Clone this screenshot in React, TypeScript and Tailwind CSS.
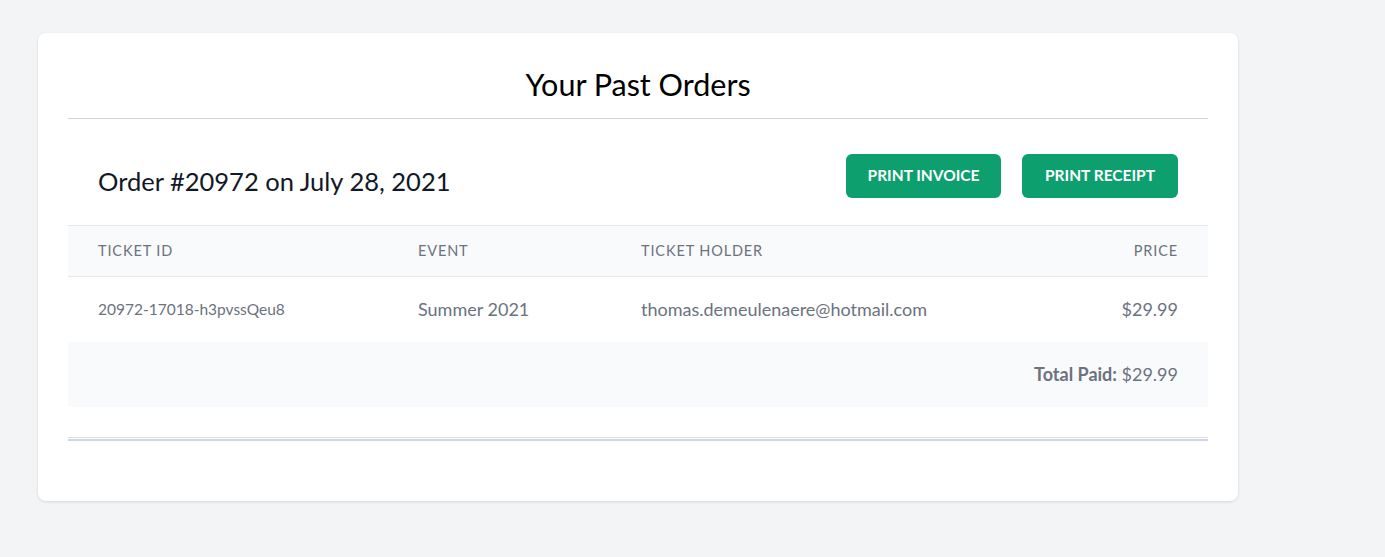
import React from 'react';

const rows = [
  {
    id: '20972-17018-h3pvssQeu8',
    event: 'Summer 2021',
    holder: 'thomas.demeulenaere@hotmail.com',
    price: '$29.99',
  },
];

export default function App() {
  return (
    <div className="min-h-[557px] bg-[#f3f4f6] pt-[33px] pl-[38px] font-['Lato','Noto_Sans',sans-serif]">
      <div className="w-[1200px] rounded-lg bg-white px-[30px] pt-[31px] pb-[60px] shadow-[0_1px_3px_rgba(0,0,0,0.12)]">
        <h1 className="border-b border-[#d4d4d8] pb-[14px] text-center text-[30.5px] leading-[40px] text-black">
          Your Past Orders
        </h1>

        <div className="flex items-center justify-between px-[30px] pt-[35px] pb-[27px]">
          <h2 className="pt-[10px] text-[25.5px] leading-[32px] text-[#111827]">Order #20972 on July 28, 2021</h2>
          <div className="flex gap-[21px]">
            <button className="h-[44px] w-[155px] rounded-md bg-[#0e9f6e] text-[15.5px] font-bold uppercase text-white">
              Print Invoice
            </button>
            <button className="h-[44px] w-[156px] rounded-md bg-[#0e9f6e] text-[15.5px] font-bold uppercase text-white">
              Print Receipt
            </button>
          </div>
        </div>

        <table className="w-full border-collapse">
          <thead>
            <tr className="h-[51px] border-y border-[#e5e7eb] bg-[#f9fafb] text-[14.5px] uppercase tracking-[0.06em] text-[#6b7280]">
              <th className="w-[320px] px-[30px] text-left font-normal">Ticket ID</th>
              <th className="w-[223px] px-[30px] text-left font-normal">Event</th>
              <th className="px-[30px] text-left font-normal">Ticket Holder</th>
              <th className="px-[30px] text-right font-normal">Price</th>
            </tr>
          </thead>
          <tbody>
            {rows.map((r) => (
              <tr key={r.id} className="h-[65px] text-[#6b7280]">
                <td className="px-[30px] text-[15.5px]">{r.id}</td>
                <td className="px-[30px] text-[18px]">{r.event}</td>
                <td className="px-[30px] text-[18px]">{r.holder}</td>
                <td className="px-[30px] text-right text-[18px]">{r.price}</td>
              </tr>
            ))}
            <tr className="h-[65px] bg-[#f9fafb] text-[18px] text-[#6b7280]">
              <td colSpan={4} className="px-[30px] text-right">
                <span className="font-bold">Total Paid:</span> $29.99
              </td>
            </tr>
          </tbody>
        </table>

        <div className="mt-[30px] border-t border-[#d8dde6]" />
        <div className="mt-px border-t-2 border-[#cdd5e1]" />
      </div>
    </div>
  );
}
